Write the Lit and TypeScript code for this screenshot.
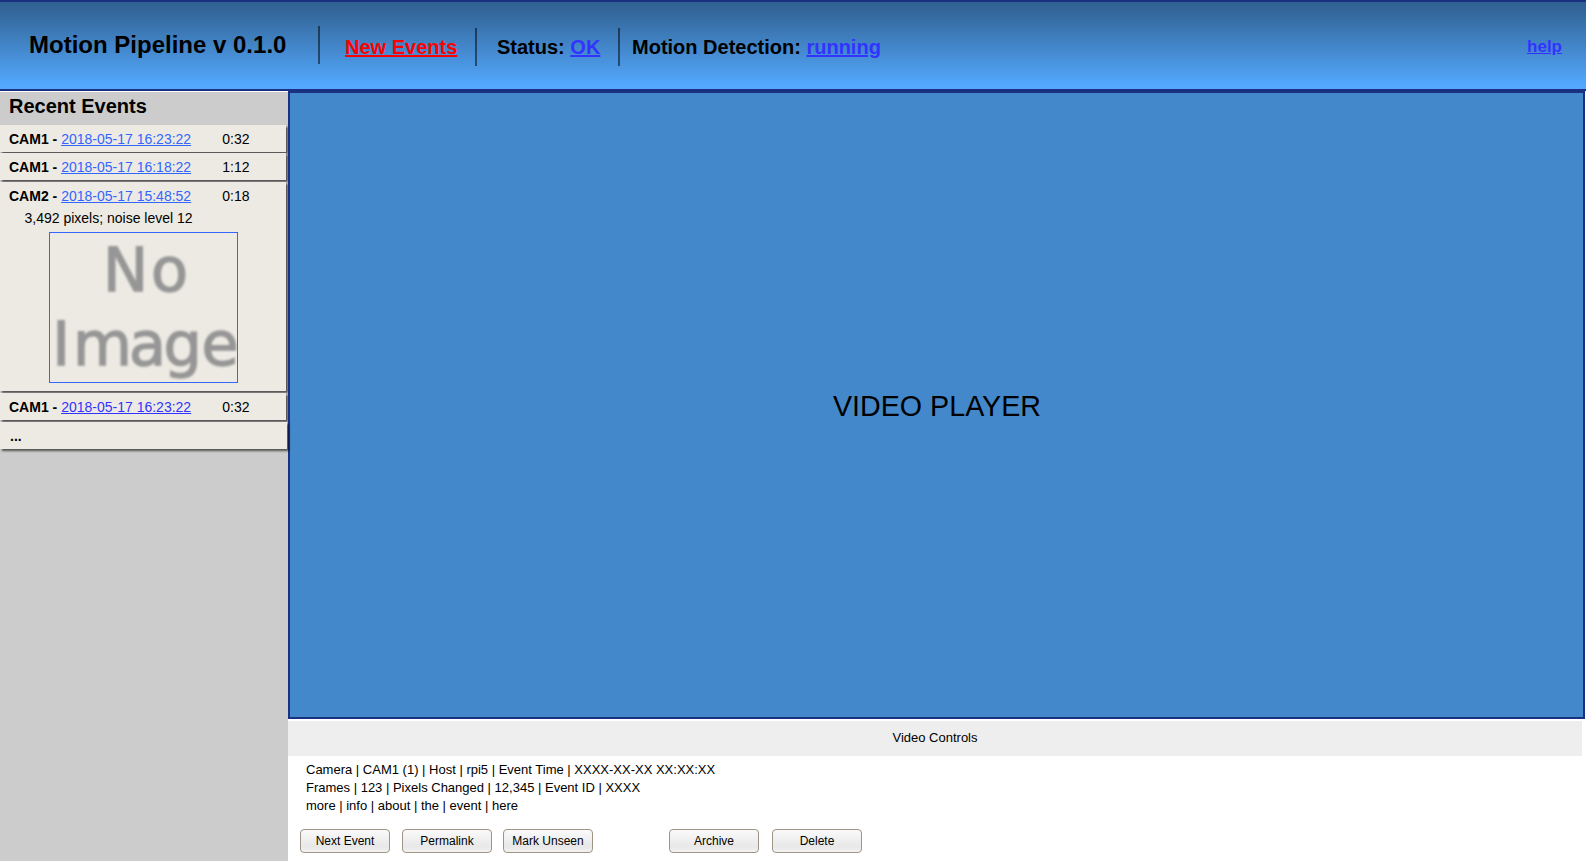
import { LitElement, html, css, nothing } from "lit";
import { customElement } from "lit/decorators.js";

interface EventRow {
  cam: string;
  time: string;
  length: string;
  kind: string;
  detail?: string;
}

const EVENTS: EventRow[] = [
  { cam: "CAM1", time: "2018-05-17 16:23:22", length: "0:32", kind: "first" },
  { cam: "CAM1", time: "2018-05-17 16:18:22", length: "1:12", kind: "second" },
  { cam: "CAM2", time: "2018-05-17 15:48:52", length: "0:18", kind: "open", detail: "3,492 pixels; noise level 12" },
  { cam: "CAM1", time: "2018-05-17 16:23:22", length: "0:32", kind: "seen" },
];

const INFO = [
  "Camera | CAM1 (1) | Host | rpi5 | Event Time | XXXX-XX-XX XX:XX:XX",
  "Frames | 123 | Pixels Changed | 12,345 | Event ID | XXXX",
  "more | info | about | the | event | here",
];

@customElement("app-header")
export class AppHeader extends LitElement {
  static styles = css`
    :host {
      display: flex;
      box-sizing: border-box;
      height: 91px;
      border-top: 2px solid #1a3080;
      border-bottom: 2px solid #1a3080;
      background: linear-gradient(#306092 0%, #336699 10%, #54a9ff 97%);
      font-weight: bold;
      font-size: 20px;
      line-height: 24px;
      white-space: nowrap;
    }
    .title { font-size: 24px; line-height: 28px; padding: 29px 0 0 29px; width: 289px; }
    .rule { width: 2px; height: 38px; margin-top: 26px; background: #000; opacity: 0.5; flex: none; }
    .rule.first { margin-top: 24px; }
    .item { padding-top: 33px; box-sizing: border-box; }
    .new { width: 155px; padding-left: 25px; }
    .status { width: 141px; padding-left: 20px; }
    .detect { padding-left: 12px; flex: 1; }
    a { color: #3333ff; text-decoration: underline; }
    .new a { color: #ff0000; }
    .help { font-size: 17px; padding: 33px 24px 0 0; }
  `;
  render() {
    return html`
      <div class="title">Motion Pipeline v 0.1.0</div>
      <div class="rule first"></div>
      <div class="item new"><a>New Events</a></div>
      <div class="rule"></div>
      <div class="item status">Status: <a>OK</a></div>
      <div class="rule"></div>
      <div class="item detect">Motion Detection: <a>running</a></div>
      <div class="help"><a>help</a></div>
    `;
  }
}

@customElement("event-list")
export class EventList extends LitElement {
  static styles = css`
    :host { display: block; width: 288px; background: #cccccc; margin-top: 1px; flex: none; }
    h2 { margin: 0; height: 33px; padding-left: 9px; font-size: 20px; line-height: 29px; }
    .row {
      position: relative;
      box-sizing: border-box;
      width: 286px;
      height: 27px;
      margin-bottom: 1px;
      padding-left: 9px;
      background: #edeae3;
      box-shadow: 2px 2px 2px rgba(0, 0, 0, 0.6);
      font-size: 14px;
      line-height: 28px;
      white-space: nowrap;
    }
    .second { margin-bottom: 2px; }
    .open { height: 209px; margin-bottom: 2px; }
    .seen { margin-bottom: 2px; }
    .seen .head { line-height: 29px; }
    .open .head { line-height: 28px; height: 28px; }
    .more { width: 287px; z-index: 2; font-weight: bold; padding-left: 10px; line-height: 28px; }
    .head { display: flex; }
    .when { width: 213.3px; }
    a { color: #3366ff; text-decoration: underline; }
    .seen a { color: #3333ff; }
    .detail { padding-left: 15.5px; line-height: 16px; }
    .thumb { display: block; margin: 6px 0 0 40px; }
    .glyphs { fill: #969696; stroke: #969696; stroke-width: 1.4px; font: 60.5px "DejaVu Sans", sans-serif; filter: blur(0.8px); }
  `;
  render() {
    return html`
      <h2>Recent Events</h2>
      ${EVENTS.map(
        (e) => html`
          <div class="row ${e.kind}">
            <div class="head">
              <div class="when"><b>${e.cam} -</b> <a>${e.time}</a></div>
              <div>${e.length}</div>
            </div>
            ${e.detail
              ? html`<div class="detail">${e.detail}</div>
                  <svg class="thumb" width="189" height="151" viewBox="0 0 189 151">
                    <rect x="0.5" y="0.5" width="188" height="150" fill="none" stroke="#3366ff" />
                    <g class="glyphs">
                      <text x="54 102" y="58.8">No</text>
                      <text x="3.2 24 80 114.6 152.4" y="132.9">Image</text>
                    </g>
                  </svg>`
              : nothing}
          </div>
        `
      )}
      <div class="row more">...</div>
    `;
  }
}

@customElement("event-viewer")
export class EventViewer extends LitElement {
  static styles = css`
    :host { display: flex; flex-direction: column; flex: 1; position: relative; z-index: 1; }
    .player {
      box-sizing: border-box;
      height: 628px;
      margin-right: 1px;
      padding: 2px 0 0 1px;
      border: 2px solid #1a3080;
      background: #4488cc;
      display: flex;
      align-items: center;
      justify-content: center;
      font-size: 28.67px;
    }
    .controls {
      height: 35px;
      margin: 2px 4px 0 0;
      background: #eeeeee;
      font-size: 13px;
      line-height: 33px;
      text-align: center;
    }
    .info { padding: 5px 0 0 18px; font-size: 13px; line-height: 18px; }
    .buttons { display: flex; padding: 14px 0 0 12px; }
    button {
      box-sizing: border-box;
      width: 90px;
      height: 24px;
      padding: 0;
      margin: 0 12px 0 0;
      border: 1px solid #a09484;
      border-radius: 4px;
      background: linear-gradient(#fafafa, #e8e8e8 75%, #f3f3f3);
      color: #000;
      font: 12px "Liberation Sans", Arial, sans-serif;
    }
    .permalink { margin-right: 11px; }
    .unseen { margin-right: 76px; }
    .archive { margin-right: 13px; }
  `;
  render() {
    return html`
      <div class="player"><span>VIDEO PLAYER</span></div>
      <div class="controls">Video Controls</div>
      <div class="info">${INFO.map((line) => html`<div>${line}</div>`)}</div>
      <div class="buttons">
        <button>Next Event</button>
        <button class="permalink">Permalink</button>
        <button class="unseen">Mark Unseen</button>
        <button class="archive">Archive</button>
        <button>Delete</button>
      </div>
    `;
  }
}

@customElement("app-root")
export class AppRoot extends LitElement {
  static styles = css`
    :host {
      display: flex;
      flex-direction: column;
      height: 100vh;
      overflow: hidden;
      background: #fff;
      color: #000;
      font-family: "Liberation Sans", Arial, sans-serif;
    }
    .body { display: flex; flex: 1; min-height: 0; }
  `;
  render() {
    return html`
      <app-header></app-header>
      <div class="body">
        <event-list></event-list>
        <event-viewer></event-viewer>
      </div>
    `;
  }
}
